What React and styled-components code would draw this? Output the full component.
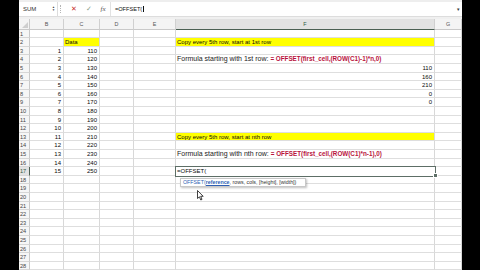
import React from "react";
import styled, { createGlobalStyle } from "styled-components";

const COLS = [
  { key: "rn", label: "", w: 11 },
  { key: "B", label: "B", w: 34 },
  { key: "C", label: "C", w: 36 },
  { key: "D", label: "D", w: 34 },
  { key: "E", label: "E", w: 42 },
  { key: "F", label: "F", w: 259 },
  { key: "G", label: "G", w: 27 },
];

const ROW_COUNT = 28;
const ACTIVE_ROW = 17;

function buildCells() {
  const cells = {};
  const put = (r, c, v) => {
    cells[r] = cells[r] || {};
    cells[r][c] = v;
  };
  put(2, "C", { type: "text", text: "Data", fill: true });
  for (let r = 3; r <= 17; r++) {
    put(r, "B", { type: "num", text: String(r - 2) });
    put(r, "C", { type: "num", text: String(110 + (r - 3) * 10) });
  }
  put(2, "F", { type: "text", text: "Copy every 5th row, start at 1st row", fill: true });
  put(4, "F", {
    type: "formula",
    label: "Formula starting with 1st row: ",
    code: "= OFFSET(first_cell,(ROW(C1)-1)*n,0)",
  });
  ["110", "160", "210", "0", "0"].forEach((v, i) => put(5 + i, "F", { type: "num", text: v }));
  put(13, "F", { type: "text", text: "Copy every 5th row, start at nth row", fill: true });
  put(15, "F", {
    type: "formula",
    label: "Formula starting with nth row: ",
    code: "= OFFSET(first_cell,(ROW(C1)*n-1),0)",
  });
  put(17, "F", { type: "active", text: "=OFFSET(" });
  return cells;
}

export default function App() {
  const cells = buildCells();
  const rows = [];
  for (let r = 1; r <= ROW_COUNT; r++) rows.push(r);

  return (
    <>
      <GlobalStyle />
      <Screen>
        <Window>
          <FormulaBar>
            <NameBox>
              <span>SUM</span>
              <Spinner>
                <i>▲</i>
                <i>▼</i>
              </Spinner>
            </NameBox>
            <Grip />
            <BarIcon $color="#c9302c">✕</BarIcon>
            <BarIcon $color="#8aa08a">✓</BarIcon>
            <FxIcon>fx</FxIcon>
            <FormulaInput>
              <span>=OFFSET(</span>
              <Caret />
              <Expand>▾</Expand>
            </FormulaInput>
          </FormulaBar>
          <Gap />
          <Sheet>
            {COLS.map((c) =>
              c.key === "rn" ? (
                <Corner key="corner">
                  <svg width="6" height="6" viewBox="0 0 6 6">
                    <path d="M6 0 L6 6 L0 6 Z" fill="#cfcfcf" />
                  </svg>
                </Corner>
              ) : (
                <ColHead key={c.key} $active={c.key === "F"}>
                  {c.label}
                </ColHead>
              )
            )}
            {rows.map((r) =>
              COLS.map((c) => {
                if (c.key === "rn") {
                  return (
                    <RowHead key={`${r}-rn`} $active={r === ACTIVE_ROW}>
                      {r}
                    </RowHead>
                  );
                }
                const cell = cells[r] && cells[r][c.key];
                if (!cell) return <Cell key={`${r}-${c.key}`} />;
                if (cell.type === "active") {
                  return (
                    <ActiveCell key={`${r}-${c.key}`}>
                      {cell.text}
                      <Tooltip>
                        <TipFn>
                          OFFSET(<b>reference</b>
                        </TipFn>
                        , rows, cols, [height], [width])
                      </Tooltip>
                      <Pointer width="7" height="11" viewBox="0 0 7 11">
                        <path
                          d="M0.5 0.5 L0.5 8.5 L2.4 6.8 L3.8 10 L5 9.4 L3.7 6.3 L6.2 6.3 Z"
                          fill="#fff"
                          stroke="#111"
                          strokeWidth="0.8"
                        />
                      </Pointer>
                    </ActiveCell>
                  );
                }
                if (cell.type === "formula") {
                  return (
                    <Cell key={`${r}-${c.key}`} $big>
                      <Label>{cell.label}</Label>
                      <Code>{cell.code}</Code>
                    </Cell>
                  );
                }
                return (
                  <Cell key={`${r}-${c.key}`} $fill={cell.fill} $num={cell.type === "num"}>
                    {cell.text}
                  </Cell>
                );
              })
            )}
          </Sheet>
        </Window>
      </Screen>
    </>
  );
}

const GlobalStyle = createGlobalStyle`
  html, body {
    margin: 0;
    padding: 0;
    background: #000;
    overflow: hidden;
    -webkit-font-smoothing: antialiased;
  }
  * {
    box-sizing: border-box;
  }
`;

const Screen = styled.div`
  width: 480px;
  height: 270px;
  background: #000;
  display: flex;
  padding-left: 19px;
  overflow: hidden;
`;

const Window = styled.div`
  width: 443px;
  height: 270px;
  background: #fff;
  display: flex;
  flex-direction: column;
  overflow: hidden;
  font-family: "Liberation Sans", Arial, sans-serif;
  color: #111;
`;

const FormulaBar = styled.div`
  height: 16px;
  flex: none;
  display: flex;
  align-items: stretch;
  border-top: 2px solid #eeeeee;
  background: #fff;
`;

const NameBox = styled.div`
  width: 39px;
  display: flex;
  align-items: center;
  justify-content: space-between;
  padding: 0 2px 0 4px;
  font-size: 6px;
  color: #333;
  border-right: 1px solid #dcdcdc;
`;

const Spinner = styled.div`
  display: flex;
  flex-direction: column;
  i {
    font-style: normal;
    font-size: 3px;
    line-height: 3px;
    color: #444;
  }
`;

const Grip = styled.div`
  width: 4px;
  margin: 3px 2px;
  border-left: 1px dotted #b5b5b5;
`;

const BarIcon = styled.div`
  width: 15px;
  display: flex;
  align-items: center;
  justify-content: center;
  font-size: 7px;
  color: ${(p) => p.$color};
`;

const FxIcon = styled.div`
  width: 14px;
  display: flex;
  align-items: center;
  justify-content: center;
  font-family: "Liberation Serif", serif;
  font-style: italic;
  font-size: 7px;
  color: #555;
`;

const FormulaInput = styled.div`
  flex: 1;
  display: flex;
  align-items: center;
  padding-left: 4px;
  border-left: 1px solid #e2e2e2;
  font-size: 5.6px;
  color: #111;
`;

const Caret = styled.div`
  width: 0.6px;
  height: 6px;
  background: #111;
  margin-left: 1px;
`;

const Expand = styled.div`
  margin-left: auto;
  padding-right: 2px;
  font-size: 5px;
  color: #333;
`;

const Gap = styled.div`
  height: 3px;
  flex: none;
  background: #f0f0f0;
  border-top: 1px solid #dddddd;
`;

const Sheet = styled.div`
  flex: none;
  display: grid;
  grid-template-columns: ${COLS.map((c) => `${c.w}px`).join(" ")};
  grid-template-rows: 10.7px repeat(${ROW_COUNT}, 8.6px);
`;

const Corner = styled.div`
  background: #f4f4f4;
  border-right: 1px solid #c9c9c9;
  border-bottom: 1px solid #c9c9c9;
  display: flex;
  align-items: flex-end;
  justify-content: flex-end;
  padding: 0 1px 1px 0;
`;

const ColHead = styled.div`
  background: ${(p) => (p.$active ? "#e2e2e2" : "#f4f4f4")};
  border-right: 1px solid #d0d0d0;
  border-bottom: 1px solid ${(p) => (p.$active ? "#4a5f52" : "#c9c9c9")};
  color: ${(p) => (p.$active ? "#2f5b40" : "#555")};
  font-size: 5.4px;
  display: flex;
  align-items: center;
  justify-content: center;
`;

const RowHead = styled.div`
  background: ${(p) => (p.$active ? "#e2e2e2" : "#f6f6f6")};
  border-bottom: 1px solid #d6d6d6;
  border-right: 1px solid ${(p) => (p.$active ? "#4a5f52" : "#c9c9c9")};
  color: ${(p) => (p.$active ? "#2f5b40" : "#444")};
  font-size: 5.6px;
  line-height: 8px;
  padding-left: 1px;
  white-space: nowrap;
`;

const Cell = styled.div`
  background: ${(p) => (p.$fill ? "#ffff00" : "#fff")};
  border-right: 1px solid #d8d8d8;
  border-bottom: 1px solid #dedede;
  font-size: 6px;
  line-height: 8px;
  padding: 0 2px 0 1px;
  text-align: ${(p) => (p.$num ? "right" : "left")};
  white-space: nowrap;
  overflow: visible;
  color: #0a0a0a;
`;

const Label = styled.span`
  font-size: 7px;
  color: #1a1a1a;
`;

const Code = styled.span`
  color: #b8123c;
  font-weight: bold;
  font-size: 6.3px;
`;

const ActiveCell = styled.div`
  position: relative;
  z-index: 2;
  background: #fff;
  font-size: 6px;
  line-height: 8px;
  padding-left: 1px;
  white-space: nowrap;
  color: #0a0a0a;
  &::before {
    content: "";
    position: absolute;
    inset: -1px -1px -1px -1px;
    border: 1.5px solid #5d6e66;
  }
  &::after {
    content: "";
    position: absolute;
    right: -2.5px;
    bottom: -2.5px;
    width: 3px;
    height: 3px;
    background: #5d6e66;
    border: 0.5px solid #fff;
  }
`;

const Tooltip = styled.div`
  position: absolute;
  top: 11px;
  left: 4px;
  width: 126px;
  height: 9px;
  background: #fff;
  border: 1px solid #c8c8c8;
  box-shadow: 1px 1px 2px rgba(0, 0, 0, 0.25);
  font-size: 5.3px;
  line-height: 7px;
  padding-left: 2px;
  color: #333;
  white-space: nowrap;
`;

const TipFn = styled.span`
  color: #2e5fb3;
  b {
    font-weight: bold;
    text-decoration: underline;
  }
`;

const Pointer = styled.svg`
  position: absolute;
  top: 23px;
  left: 21px;
`;
